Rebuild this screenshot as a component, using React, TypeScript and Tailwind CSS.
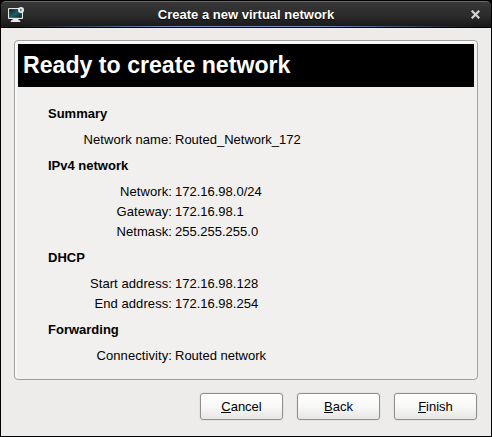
import type { ReactNode } from "react";

type Row = { label: string; value: string };

const sections: { title: string; rows: Row[] }[] = [
  { title: "Summary", rows: [{ label: "Network name:", value: "Routed_Network_172" }] },
  {
    title: "IPv4 network",
    rows: [
      { label: "Network:", value: "172.16.98.0/24" },
      { label: "Gateway:", value: "172.16.98.1" },
      { label: "Netmask:", value: "255.255.255.0" },
    ],
  },
  {
    title: "DHCP",
    rows: [
      { label: "Start address:", value: "172.16.98.128" },
      { label: "End address:", value: "172.16.98.254" },
    ],
  },
  { title: "Forwarding", rows: [{ label: "Connectivity:", value: "Routed network" }] },
];

function MonitorIcon() {
  return (
    <svg width="16" height="16" viewBox="0 0 16 16" className="block">
      <defs>
        <linearGradient id="screen" x1="0" y1="0" x2="1" y2="1">
          <stop offset="0" stopColor="#0b1618" />
          <stop offset="0.5" stopColor="#1d5f62" />
          <stop offset="1" stopColor="#0c1f21" />
        </linearGradient>
      </defs>
      <rect x="0" y="1" width="15" height="11" rx="0.8" fill="#e4e5e2" />
      <rect x="1.1" y="2.1" width="12.8" height="8.7" fill="url(#screen)" />
      <path d="M4.5 12h6v1.2h1.3l.7 1.8H2.5l.7-1.8h1.3z" fill="#e8e8e6" />
      <circle cx="13" cy="3" r="3" fill="#e5eeee" />
      <path d="M12.1 1.6v2.8L14.4 3z" fill="#3c6e70" />
    </svg>
  );
}

function DialogButton({ children }: { children: ReactNode }) {
  return (
    <button className="h-[27px] w-[83px] rounded-[3px] border border-[#8f8e8c] bg-linear-to-b from-white via-[#f8f8f7] to-[#e7e6e4] pb-px text-[13px] leading-[25px] shadow-[0_0_0_1px_#e5e4e2]">
      {children}
    </button>
  );
}

function Mnemonic({ children }: { children: ReactNode }) {
  return <span className="inline-block h-[14px] border-b border-black leading-[15px]">{children}</span>;
}

export default function App() {
  return (
    <div className="h-[437px] w-[492px] bg-black font-['Liberation_Sans',Arial,sans-serif] text-[13px] text-black">
      <div className="flex h-full flex-col pr-px pb-px pl-px">
        <header className="mt-px h-[27px] rounded-t-[5px] border-t border-[#686868] bg-linear-to-b from-[#383838] via-[#2c2c2c] to-[#171717]">
          <div className="grid h-[24px] grid-cols-[30px_1fr_30px] items-start">
            <div className="pt-[5px] pl-[7px]">
              <MonitorIcon />
            </div>
            <h1 className="pt-px text-center text-[13px] leading-[24px] font-bold text-white [text-shadow:0_1px_1px_#000]">
              Create a new virtual network
            </h1>
            <svg width="9" height="9" viewBox="0 0 9 9" className="mt-[8px] ml-[10px] block">
              <path d="M1.5 1.5l6 6M7.5 1.5L1.5 7.5" stroke="#d4d4d2" strokeWidth="2.2" strokeLinecap="square" />
            </svg>
          </div>
          <div className="h-px bg-[linear-gradient(to_right,#1b1b1b_5%,#6f93c8_35%,#6f93c8_65%,#1b1b1b_95%)]" />
          <div className="h-px bg-black" />
        </header>
        <main className="flex-1 bg-[#edeceb] px-[13px] pt-[12px]">
          <section className="h-[340px] rounded-[4px] border border-[#a09f9d] bg-[#f1f0ee] p-[3px] shadow-[inset_1px_1px_0_1px_#f8fafc]">
            <h2 className="h-[43px] w-[456px] bg-black pl-[5px] text-[24px] leading-[41px] font-bold whitespace-nowrap text-white">
              <span className="inline-block origin-left scale-x-[0.964]">Ready to create network</span>
            </h2>
            <div className="pt-[14px] pl-[30px]">
              {sections.map((section) => (
                <div key={section.title} className="pb-[3px]">
                  <h3 className="mb-[3px] h-[26px] pt-[3px] text-[13px] leading-[20px] font-bold">{section.title}</h3>
                  {section.rows.map((row) => (
                    <div key={row.label} className="flex h-[20px] gap-[3px] leading-[20px] whitespace-nowrap">
                      <span className="w-[124px] text-right tracking-[0.08px]">{row.label}</span>
                      <span>{row.value}</span>
                    </div>
                  ))}
                </div>
              ))}
            </div>
          </section>
          <footer className="flex justify-end gap-[14px] pt-[13px] pr-px">
            <DialogButton>
              <Mnemonic>C</Mnemonic>ancel
            </DialogButton>
            <DialogButton>
              <Mnemonic>B</Mnemonic>ack
            </DialogButton>
            <DialogButton>
              <Mnemonic>F</Mnemonic>inish
            </DialogButton>
          </footer>
        </main>
      </div>
    </div>
  );
}
